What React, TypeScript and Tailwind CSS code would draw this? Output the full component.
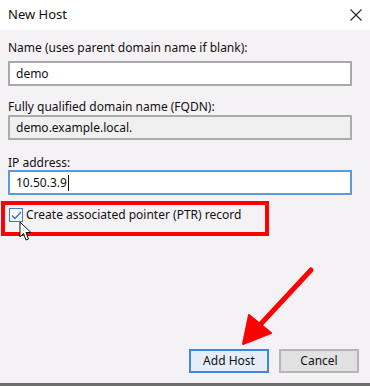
import React from "react";

const FONT = { fontFamily: '"Noto Sans", "Segoe UI", Arial, sans-serif' };

function Field({
  label,
  value,
  gap,
  readOnly,
  focused,
}: {
  label: string;
  value: string;
  gap: string;
  readOnly?: boolean;
  focused?: boolean;
}) {
  const box = focused
    ? "border-[#5a9bdc] bg-white"
    : readOnly
      ? "border-[#acacac] bg-[#f0f0f0]"
      : "border-[#a9a9a9] bg-white";
  return (
    <div className="flex flex-col">
      <label className="h-[14px] text-[12px] leading-[14px] text-[#111]">{label}</label>
      <div
        className={`${gap} mr-[10px] flex h-[25px] items-center border-2 px-[6px] text-[12px] text-[#111] ${box}`}
      >
        <span>{value}</span>
        {focused && <span className="ml-px h-[16px] w-px bg-black" />}
      </div>
    </div>
  );
}

function Cursor() {
  return (
    <svg width="14" height="22" viewBox="0 0 14 22" className="absolute left-[19px] top-[221px]">
      <path
        d="M1 1 L1 16 L4.5 12.5 L7 19 L9.5 18 L7 11.5 L12 11.5 Z"
        fill="#fff"
        stroke="#111"
        strokeWidth="1"
        strokeLinejoin="round"
      />
    </svg>
  );
}

function RedArrow() {
  return (
    <svg width="370" height="386" className="pointer-events-none absolute left-0 top-0">
      <line x1="311" y1="270" x2="258" y2="327" stroke="#ff0000" strokeWidth="5" strokeLinecap="round" />
      <polygon points="243,344 249,315 271,333" fill="#ff0000" stroke="#ff0000" strokeWidth="2" strokeLinejoin="round" />
    </svg>
  );
}

export default function App() {
  return (
    <div className="relative flex h-[386px] w-[370px] flex-col overflow-hidden bg-[#f5f2f5]" style={FONT}>
      <div className="flex h-[30px] items-center justify-between bg-white pl-2 pr-[4px]">
        <span className="text-[13px] text-[#111]">New Host</span>
        <svg width="14" height="14" viewBox="0 0 14 14" className="mr-[3px]">
          <path d="M1.5 1.5 L12.5 12.5 M12.5 1.5 L1.5 12.5" stroke="#222" strokeWidth="1.1" />
        </svg>
      </div>

      <div className="flex flex-1 flex-col px-2 pt-[11px]">
        <Field label="Name (uses parent domain name if blank):" value="demo" gap="mt-[6px]" />
        <div className="mt-[14px]">
          <Field label="Fully qualified domain name (FQDN):" value="demo.example.local." gap="mt-px" readOnly />
        </div>
        <div className="mt-[16px]">
          <Field label="IP address:" value="10.50.3.9" gap="mt-0" focused />
        </div>

        <div className="mt-[11px] flex items-center gap-[3px] pl-px">
          <span className="flex h-[14px] w-[14px] items-center justify-center border border-[#3a7bd8] bg-white">
            <svg width="11" height="9" viewBox="0 0 11 9">
              <path d="M1 4.5 L4 7.5 L10 1" stroke="#2b6fd3" strokeWidth="1.4" fill="none" />
            </svg>
          </span>
          <span className="text-[12px] text-[#111]">Create associated pointer (PTR) record</span>
        </div>

        <div className="mt-auto mb-[10px] flex justify-end gap-[10px] pr-[3px]">
          <button className="h-[24px] w-[80px] border-2 border-[#3d86dc] bg-[#e5eef8] text-[12px] text-[#111]">
            Add Host
          </button>
          <button className="h-[24px] w-[80px] border-2 border-[#b5b5b5] bg-[#e1e1e1] text-[12px] text-[#111]">
            Cancel
          </button>
        </div>
      </div>
      <div className="h-[3px] bg-[#6e6e6e]" />

      <div className="pointer-events-none absolute left-[1px] top-[201px] h-[35px] w-[268px] border-4 border-[#ff0000]" />
      <Cursor />
      <RedArrow />
    </div>
  );
}
